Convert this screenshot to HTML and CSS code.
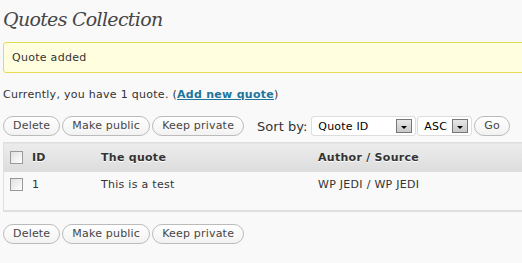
FILE: index.html
```html
<!DOCTYPE html>
<html lang="en">
<head>
  <meta charset="UTF-8">
  <title>Quotes Collection</title>
  <link rel="stylesheet" href="styles.css">
</head>
<body>
  <div class="wrap">
    <h2 class="page-title">Quotes Collection</h2>

    <div class="notice">Quote added</div>

    <p class="summary">Currently, you have 1 quote. (<a href="#">Add new quote</a>)</p>

    <div class="tablenav">
      <button class="btn">Delete</button>
      <button class="btn">Make public</button>
      <button class="btn">Keep private</button>
      <span class="sort-label">Sort by:</span>
      <span class="select select-wide">Quote ID<span class="arrow"></span></span>
      <span class="select select-narrow">ASC<span class="arrow"></span></span>
      <button class="btn">Go</button>
    </div>

    <table class="quotes">
      <thead>
        <tr>
          <th class="col-check"><span class="checkbox"></span></th>
          <th class="col-id">ID</th>
          <th class="col-quote">The quote</th>
          <th class="col-author">Author / Source</th>
        </tr>
      </thead>
      <tbody>
        <tr>
          <td class="col-check"><span class="checkbox"></span></td>
          <td class="col-id">1</td>
          <td class="col-quote">This is a test</td>
          <td class="col-author">WP JEDI / WP JEDI</td>
        </tr>
      </tbody>
    </table>

    <div class="tablenav tablenav-bottom">
      <button class="btn">Delete</button>
      <button class="btn">Make public</button>
      <button class="btn">Keep private</button>
    </div>
  </div>
</body>
</html>
```

FILE: styles.css
```css
body {
  margin: 0;
  background: #f9f9f9;
  color: #333;
  font-family: 'DejaVu Sans', Verdana, sans-serif;
  font-size: 11px;
  letter-spacing: 0.28px;
}

.wrap {
  padding: 0 0 0 3px;
  width: 560px;
}

.page-title {
  margin: 0;
  padding: 7px 0 0 0;
  height: 42px;
  box-sizing: border-box;
  font-family: 'DejaVu Serif', Georgia, serif;
  font-style: italic;
  font-weight: normal;
  font-size: 19px;
  line-height: 24px;
  color: #464646;
  letter-spacing: -0.7px;
}

.notice {
  background: #ffffe0;
  border: 1px solid #e6db55;
  border-radius: 3px;
  padding: 0 8px;
  height: 29px;
  line-height: 29px;
}

.summary {
  margin: 15px 0 0 0;
  line-height: 14px;
}

.summary a {
  color: #21759b;
  font-weight: bold;
}

.tablenav {
  display: flex;
  align-items: center;
  gap: 2px;
  margin-top: 14px;
  height: 20px;
}

.tablenav-bottom {
  margin-top: 12px;
}

.btn {
  height: 20px;
  padding: 0 9px;
  border: 1px solid #bbb;
  border-radius: 11px;
  background: linear-gradient(#fff, #f2f2f2);
  color: #464646;
  font-family: inherit;
  font-size: 11px;
  letter-spacing: 0.2px;
  line-height: 18px;
  cursor: pointer;
}

.sort-label {
  margin: 0 2px 0 11px;
  font-size: 13px;
  letter-spacing: 0;
  color: #333;
}

.select {
  display: flex;
  align-items: center;
  justify-content: space-between;
  height: 18px;
  padding: 0 3px 0 6px;
  border: 1px solid #ddd;
  border-radius: 3px;
  background: #fff;
  color: #000;
  font-size: 11px;
  letter-spacing: 0.2px;
}

.select-wide {
  width: 94px;
}

.select-narrow {
  width: 44px;
  margin-left: -1px;
}

.arrow {
  width: 14px;
  height: 12px;
  border: 1px solid #777;
  background: linear-gradient(#e8e8e8, #c8c8c8);
  position: relative;
}

.arrow::after {
  content: '';
  position: absolute;
  left: 4px;
  top: 6px;
  border-left: 3px solid transparent;
  border-right: 3px solid transparent;
  border-top: 3px solid #000;
}

.quotes {
  margin-top: 6px;
  width: 100%;
  border-collapse: collapse;
  border-top: 1px solid #dfdfdf;
  border-bottom: 2px solid #dfdfdf;
  border-left: 1px solid #dfdfdf;
}

.quotes th {
  height: 29px;
  padding: 0;
  text-align: left;
  font-weight: bold;
  color: #333;
  text-shadow: 0 1px 0 #fff;
  background: linear-gradient(#ececec, #dcdcdc);
}

.quotes td {
  height: 39px;
  padding: 6px 0 0 0;
  vertical-align: top;
  box-sizing: border-box;
}

.col-check {
  width: 22px;
  padding-left: 6px !important;
}

.col-id {
  width: 69px;
}

.col-quote {
  width: 217px;
}

.checkbox {
  display: block;
  width: 11px;
  height: 11px;
  border: 1px solid #999;
  background: linear-gradient(135deg, #e0e0e0, #fff);
}
```
